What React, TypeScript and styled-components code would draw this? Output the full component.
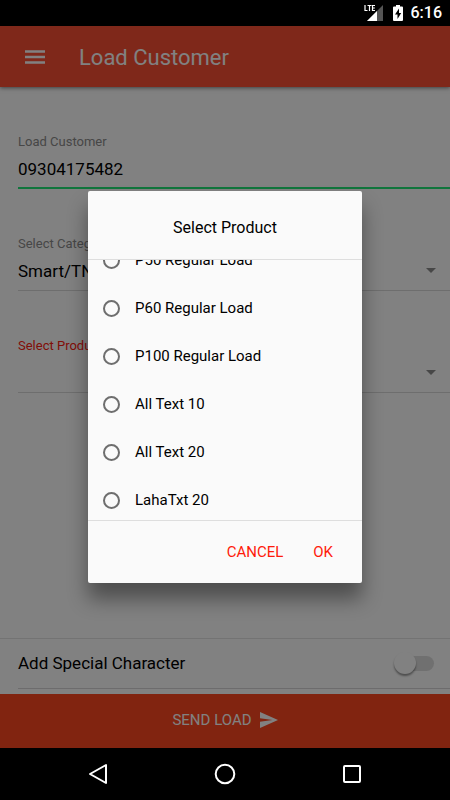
import React, { useLayoutEffect, useRef, useState } from "react";
import styled, { createGlobalStyle } from "styled-components";

const GlobalStyle = createGlobalStyle`
  * { box-sizing: border-box; }
  body { margin: 0; background: #000; }
  body, button, input, select { font-family: Roboto, sans-serif; }
`;

const Screen = styled.div`
  display: flex;
  flex-direction: column;
  min-height: 100vh;
  background: #000;
`;

const StatusBar = styled.div`
  display: flex;
  align-items: center;
  justify-content: flex-end;
  height: 26px;
  padding-right: 8px;
  color: #fff;
`;

const SignalIcon = styled.svg`
  width: 20px;
  height: 18px;
  margin-right: 9px;
`;

const BatteryIcon = styled.svg`
  width: 10px;
  height: 16px;
  margin-right: 8px;
`;

const Clock = styled.time`
  font-size: 16px;
  font-weight: 500;
  line-height: 24px;
`;

const AppArea = styled.div`
  position: relative;
  flex: 1;
  display: flex;
  flex-direction: column;
  background: #fff;
`;

const Toolbar = styled.header`
  display: flex;
  align-items: center;
  gap: 34px;
  height: 61px;
  padding: 0 25px;
  background: #fb5035;
  box-shadow: 0 1px 4px rgba(0, 0, 0, 0.5);
  color: #fff;
`;

const MenuButton = styled.button`
  display: flex;
  padding: 0;
  border: 0;
  background: none;
  color: inherit;
`;

const Title = styled.h1`
  margin: 0;
  padding-top: 2px;
  font-size: 22px;
  font-weight: 400;
  line-height: 28px;
`;

const Form = styled.main`
  flex: 1;
  padding-left: 18px;
`;

const Field = styled.div`
  padding-top: 46px;
`;

const FieldLabel = styled.label<{ $invalid?: boolean }>`
  display: block;
  font-size: 13px;
  line-height: 18px;
  color: ${(p) => (p.$invalid ? "#ff2010" : "#8c8c8c")};
`;

const TextInput = styled.input`
  display: block;
  width: 100%;
  height: 38px;
  padding: 0;
  border: 0;
  border-bottom: 2px solid #20e878;
  border-radius: 0;
  outline: 0;
  background: none;
  font-size: 17px;
  color: #000;
`;

const SelectBox = styled.div`
  display: flex;
  align-items: center;
  height: 38px;
  padding: 0 14px 2px 0;
  border-bottom: 1px solid #dadada;
`;

const Select = styled.select`
  flex: 1;
  height: 35px;
  padding: 0;
  border: 0;
  appearance: none;
  background: none;
  font-size: 17px;
  color: #000;
`;

const ToggleBar = styled.div`
  height: 56px;
  padding-left: 18px;
  border-top: 1px solid #e4e4e4;
`;

const ToggleRow = styled.label`
  display: flex;
  align-items: center;
  justify-content: space-between;
  height: 50px;
  padding: 0 16px 1px 0;
  border-bottom: 1px solid #d8d6d8;
  font-size: 17px;
  color: #000;
`;

const Toggle = styled.input`
  display: flex;
  align-items: center;
  width: 36px;
  height: 15px;
  margin: 0;
  border-radius: 8px;
  appearance: none;
  background: #dedede;

  &::before {
    content: "";
    width: 22px;
    height: 22px;
    margin-left: -4px;
    border-radius: 50%;
    background: #fff;
    box-shadow: 0 2px 2px rgba(0, 0, 0, 0.4);
  }

  &:checked {
    justify-content: flex-end;
    background: #ffa08c;
  }
`;

const SendButton = styled.button`
  display: flex;
  align-items: center;
  justify-content: center;
  gap: 8px;
  height: 54px;
  padding: 0 0 2px;
  border: 0;
  background: #ff4820;
  font-size: 15px;
  color: #fff;
`;

const Backdrop = styled.div`
  position: absolute;
  inset: 0;
  display: flex;
  align-items: center;
  justify-content: center;
  background: rgba(0, 0, 0, 0.495);
`;

const Dialog = styled.section`
  width: 274px;
  border-radius: 2px;
  background: #fafafa;
  box-shadow: 0 16px 20px rgba(0, 0, 0, 0.4);
`;

const DialogTitle = styled.h2`
  margin: 0;
  padding: 25px 24px 19px;
  border-bottom: 1px solid #dedede;
  text-align: center;
  font-size: 16px;
  font-weight: 400;
  line-height: 24px;
  color: #000;
`;

const OptionList = styled.div`
  max-height: 260px;
  overflow-y: auto;
  scrollbar-width: none;
`;

const Option = styled.label`
  display: flex;
  align-items: center;
  gap: 15px;
  height: 48px;
  padding: 0 15px;
  font-size: 15px;
  color: #000;
`;

const Radio = styled.input`
  display: grid;
  place-items: center;
  width: 17px;
  height: 17px;
  margin: 1px 0 0;
  border: 2px solid #6e6e6e;
  border-radius: 50%;
  appearance: none;

  &:checked::before {
    content: "";
    width: 9px;
    height: 9px;
    border-radius: 50%;
    background: #ff2010;
  }
`;

const DialogActions = styled.div`
  display: flex;
  justify-content: flex-end;
  gap: 14px;
  padding: 13px 21px 13px;
  border-top: 1px solid #dedede;
`;

const ActionButton = styled.button`
  height: 36px;
  padding: 0 8px;
  border: 0;
  background: none;
  font-size: 15px;
  color: #ff1a0a;
`;

const NavBar = styled.nav`
  display: flex;
  align-items: center;
  justify-content: center;
  gap: 103px;
  height: 52px;
`;

const NavButton = styled.button`
  display: flex;
  padding: 0;
  border: 0;
  background: none;
  color: #fff;
`;

const products = [
  "P50 Regular Load",
  "P60 Regular Load",
  "P100 Regular Load",
  "All Text 10",
  "All Text 20",
  "LahaTxt 20",
];

const Caret = () => (
  <svg width="10" height="5" viewBox="0 0 10 5" aria-hidden="true">
    <path d="M0 0h10L5 5z" fill="#8c8c8c" />
  </svg>
);

export default function App() {
  const listRef = useRef<HTMLDivElement>(null);
  const [product, setProduct] = useState("");

  useLayoutEffect(() => {
    if (listRef.current) listRef.current.scrollTop = 24;
  }, []);

  return (
    <Screen>
      <GlobalStyle />
      <StatusBar>
        <SignalIcon viewBox="0 0 20 18" role="img" aria-label="LTE signal">
          <path d="M19 1v16H3z" fill="#555" />
          <path d="M13 7v10H3z" fill="#fff" />
          <path d="M0 0h12v8H0z" fill="#000" />
          <path
            d="M1 1v5.5h2.5M3.5 1.5h4M5.5 1.5V7M11 1.5H8.5v5H11M8.5 4h2.3"
            fill="none"
            stroke="#fff"
            strokeWidth="1.2"
          />
        </SignalIcon>
        <BatteryIcon viewBox="0 0 10 16" role="img" aria-label="Charging">
          <path d="M3 0h4v1.5h2q1 0 1 1V15q0 1-1 1H1q-1 0-1-1V2.5q0-1 1-1h2z" fill="#fff" />
          <path d="M6 3.500 2 9.500h2.500V14l3.700-6H6z" fill="#000" />
        </BatteryIcon>
        <Clock>6:16</Clock>
      </StatusBar>

      <AppArea>
        <Toolbar>
          <MenuButton aria-label="Menu">
            <svg width="20" height="14" viewBox="0 0 20 14">
              <path d="M0 1.500h20M0 7h20M0 12.500h20" stroke="currentColor" strokeWidth="2.400" />
            </svg>
          </MenuButton>
          <Title>Load Customer</Title>
        </Toolbar>

        <Form>
          <Field>
            <FieldLabel htmlFor="customer">Load Customer</FieldLabel>
            <TextInput id="customer" type="tel" defaultValue="09304175482" />
          </Field>
          <Field>
            <FieldLabel htmlFor="category">Select Category</FieldLabel>
            <SelectBox>
              <Select id="category">
                <option>Smart/TNT</option>
              </Select>
              <Caret />
            </SelectBox>
          </Field>
          <Field>
            <FieldLabel htmlFor="product" $invalid>
              Select Product
            </FieldLabel>
            <SelectBox>
              <Select id="product">
                <option />
              </Select>
              <Caret />
            </SelectBox>
          </Field>
        </Form>

        <ToggleBar>
          <ToggleRow>
            Add Special Character
            <Toggle type="checkbox" role="switch" />
          </ToggleRow>
        </ToggleBar>
        <SendButton>
          SEND LOAD
          <svg width="18" height="16" viewBox="0 0 18 16" aria-hidden="true">
            <path d="M0 0l18 8-18 8V9.800L12.500 8 0 6.200z" fill="currentColor" />
          </svg>
        </SendButton>

        <Backdrop>
          <Dialog role="dialog" aria-modal="true" aria-labelledby="dialog-title">
            <DialogTitle id="dialog-title">Select Product</DialogTitle>
            <OptionList ref={listRef} role="radiogroup" aria-labelledby="dialog-title">
              {products.map((name) => (
                <Option key={name}>
                  <Radio
                    type="radio"
                    name="product"
                    checked={product === name}
                    onChange={() => setProduct(name)}
                  />
                  {name}
                </Option>
              ))}
            </OptionList>
            <DialogActions>
              <ActionButton>CANCEL</ActionButton>
              <ActionButton>OK</ActionButton>
            </DialogActions>
          </Dialog>
        </Backdrop>
      </AppArea>

      <NavBar>
        <NavButton aria-label="Back">
          <svg width="24" height="24" viewBox="0 0 24 24">
            <path d="M20 3v18L4 12z" fill="none" stroke="currentColor" strokeWidth="2" strokeLinejoin="round" />
          </svg>
        </NavButton>
        <NavButton aria-label="Home">
          <svg width="24" height="24" viewBox="0 0 24 24">
            <circle cx="12" cy="12" r="9.300" fill="none" stroke="currentColor" strokeWidth="2" />
          </svg>
        </NavButton>
        <NavButton aria-label="Recent apps">
          <svg width="24" height="24" viewBox="0 0 24 24">
            <rect x="4" y="4" width="16" height="16" rx="1" fill="none" stroke="currentColor" strokeWidth="2" />
          </svg>
        </NavButton>
      </NavBar>
    </Screen>
  );
}
